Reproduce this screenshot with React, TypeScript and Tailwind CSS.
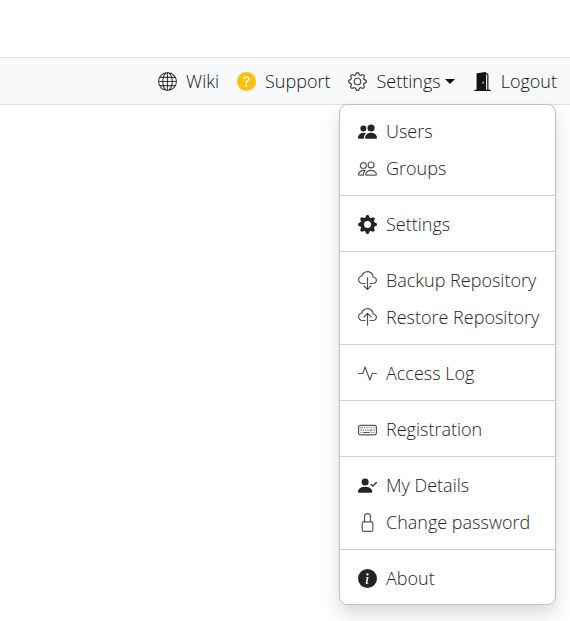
import type { IconType } from "react-icons";
import {
  BsActivity,
  BsCloudDownload,
  BsCloudUpload,
  BsDoorOpenFill,
  BsGear,
  BsGearFill,
  BsGlobe,
  BsInfoCircleFill,
  BsKeyboard,
  BsLock,
  BsPeople,
  BsPeopleFill,
  BsPersonCheckFill,
  BsQuestionCircleFill,
} from "react-icons/bs";

type Entry = { label: string; icon: IconType; outline?: boolean };

const groups: Entry[][] = [
  [
    { label: "Users", icon: BsPeopleFill },
    { label: "Groups", icon: BsPeople, outline: true },
  ],
  [{ label: "Settings", icon: BsGearFill }],
  [
    { label: "Backup Repository", icon: BsCloudDownload, outline: true },
    { label: "Restore Repository", icon: BsCloudUpload, outline: true },
  ],
  [{ label: "Access Log", icon: BsActivity, outline: true }],
  [{ label: "Registration", icon: BsKeyboard, outline: true }],
  [
    { label: "My Details", icon: BsPersonCheckFill },
    { label: "Change password", icon: BsLock, outline: true },
  ],
  [{ label: "About", icon: BsInfoCircleFill }],
];

function SettingsMenu() {
  return (
    <div
      id="settings-menu"
      className="absolute right-[14px] top-full z-10 w-[217px] rounded-lg border border-[#bfc0c1] bg-white pb-[7px] pt-2 text-[#212529] shadow-[0_9px_18px_rgba(0,0,0,0.15)]"
    >
      {groups.map((group, index) => (
        <div key={index}>
          {index > 0 && <hr className="mb-[10px] mt-2 border-[#d0d1d2]" />}
          <ul>
            {group.map(({ label, icon: Icon, outline }) => (
              <li key={label}>
                <a href="#" className="flex h-[37px] items-center gap-[9px] whitespace-nowrap pl-[18px]">
                  {/* A background-coloured edge keeps the outline icons light beside the text */}
                  <Icon
                    size={19}
                    className={outline ? "shrink-0 stroke-white stroke-[0.25]" : "shrink-0"}
                    aria-hidden="true"
                  />
                  {label}
                </a>
              </li>
            ))}
          </ul>
        </div>
      ))}
    </div>
  );
}

export default function App() {
  return (
    <div className="min-h-screen bg-white pt-[57px] font-['Open_Sans','Noto_Sans',sans-serif] text-[18px] font-light text-[#212529]">
      <nav className="relative flex h-12 items-center justify-end gap-[18px] border-y border-[#dee2e6] bg-[#f8f9fa] pr-[13px] text-[#111315]">
        <a href="#" className="flex items-center gap-[9px]">
          <BsGlobe size={19} className="stroke-[#f8f9fa] stroke-[0.25]" aria-hidden="true" />
          Wiki
        </a>
        <a href="#" className="flex items-center gap-[9px]">
          <BsQuestionCircleFill size={19} className="text-[#ffc107]" aria-hidden="true" />
          Support
        </a>
        <button
          type="button"
          aria-expanded="true"
          aria-controls="settings-menu"
          className="flex items-center gap-[9px]"
        >
          <BsGear size={19} className="stroke-[#f8f9fa] stroke-[0.25]" aria-hidden="true" />
          <span className="flex items-center gap-1">
            Settings
            <span className="border-x-[5px] border-t-[5px] border-x-transparent border-t-current" />
          </span>
        </button>
        <a href="#" className="flex items-center gap-[9px]">
          <BsDoorOpenFill size={19} aria-hidden="true" />
          Logout
        </a>
        <SettingsMenu />
      </nav>
    </div>
  );
}
